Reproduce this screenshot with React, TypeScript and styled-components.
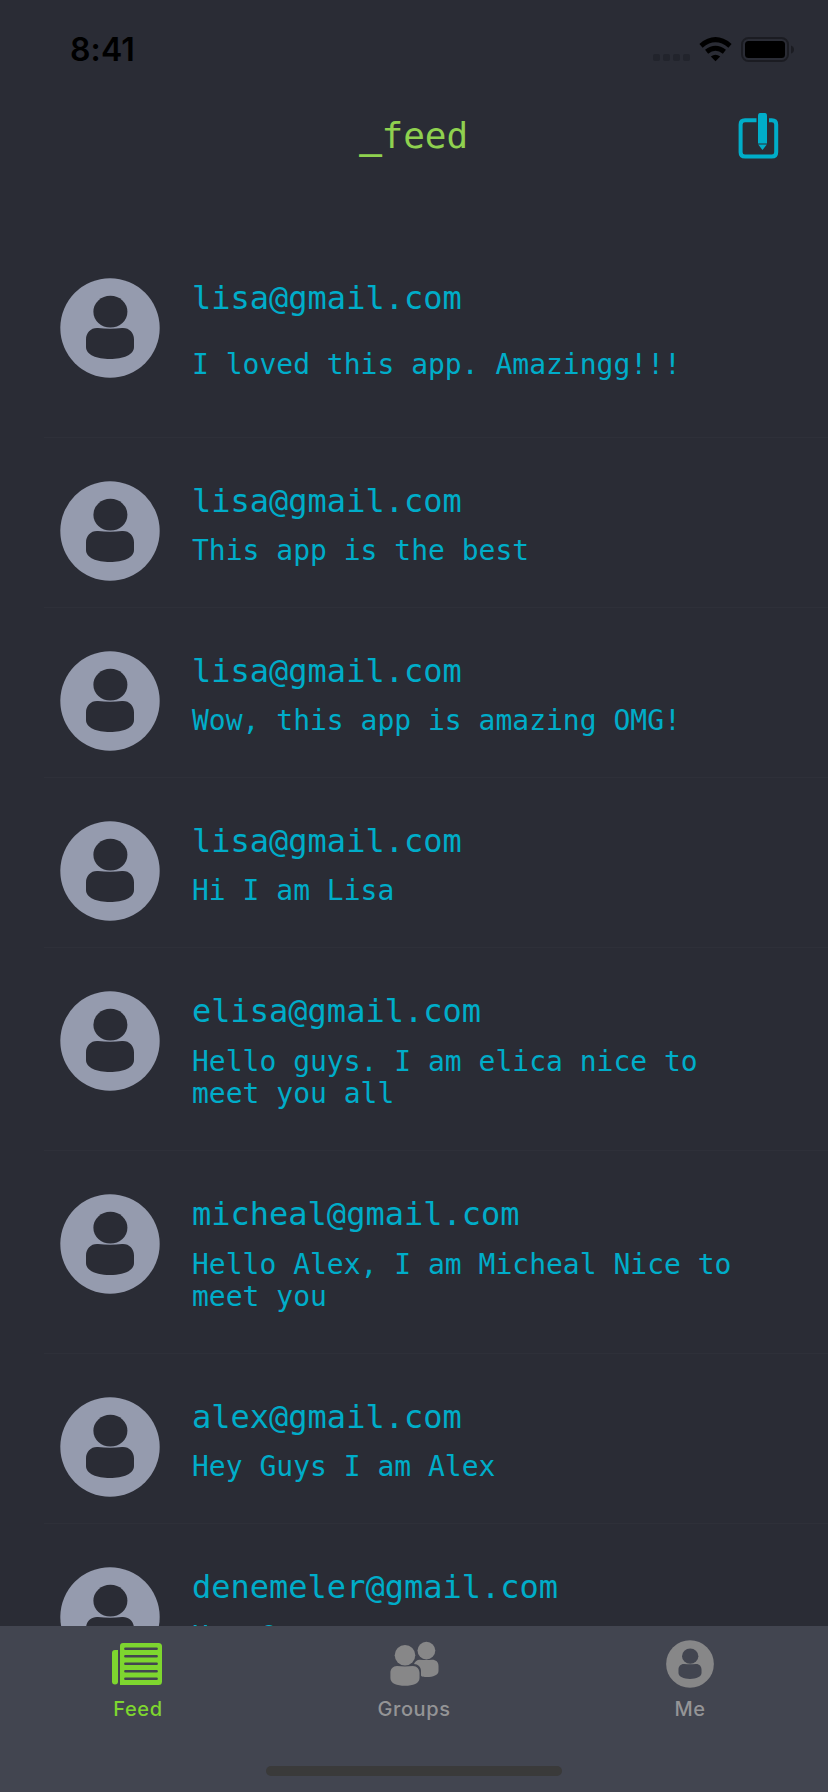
import React from 'react';
import styled, { createGlobalStyle } from 'styled-components';

const Global = createGlobalStyle`
  * { box-sizing: border-box; }
  body { margin: 0; background: #2a2c35; }
`;

const Screen = styled.div`
  width: 828px;
  height: 1792px;
  display: flex;
  flex-direction: column;
  overflow: hidden;
  background: #2a2c35;
  font-family: "DejaVu Sans Mono", monospace;
  color: #00adc9;
`;

const StatusBar = styled.header`
  height: 88px;
  flex: none;
  display: flex;
  justify-content: space-between;
  align-items: flex-start;
  padding: 31px 34px 0 70px;
  color: #000;
`;

const Clock = styled.time`
  font: 600 32px/38px Inter, sans-serif;
  letter-spacing: 0.1px;
`;

const StatusIcons = styled.svg`
  display: block;
  width: 142px;
  height: 26px;
  margin-top: 6px;
`;

const NavBar = styled.div`
  height: 147px;
  flex: none;
  display: grid;
  grid-template-columns: 1fr auto 1fr;
  padding: 24px 48px 0;
`;

const Title = styled.h1`
  grid-column: 2;
  margin: 3px 0 0;
  font-size: 36px;
  line-height: 42px;
  font-weight: 400;
  color: #8fd14f;
`;

const Cursor = styled.span`
  -webkit-text-stroke: 1.4px currentColor;
`;

const ComposeButton = styled.button`
  justify-self: end;
  width: 42px;
  height: 48px;
  padding: 0;
  border: 0;
  background: none;
  color: inherit;
  svg { display: block; }
`;

const FeedList = styled.main`
  flex: 1;
  min-height: 0;
  overflow: hidden;
`;

const Row = styled.article<{ $tall?: boolean }>`
  height: ${(p) => (p.$tall ? 203 : 170)}px;
  display: flex;
  gap: 32px;
  margin-left: 44px;
  padding: 43px 92px 0 16px;
  border-bottom: 1px solid #2e3039;
`;

const AvatarIcon = styled.svg`
  flex: none;
  display: block;
`;

const Message = styled.div`
  flex: 1;
  min-width: 0;
  padding-top: 1px;
`;

const Email = styled.div`
  font-size: 32px;
  line-height: 38px;
`;

const Body = styled.p<{ $tall?: boolean }>`
  display: flex;
  align-items: center;
  height: ${(p) => (p.$tall ? 66 : 33)}px;
  margin: 15px 0 0;
  font-size: 28px;
  line-height: 32.5px;
`;

const TabBar = styled.nav`
  height: 166px;
  flex: none;
  display: flex;
  flex-direction: column;
  align-items: center;
  justify-content: space-between;
  padding-bottom: 16px;
  background: #424550;
`;

const Tabs = styled.div`
  width: 100%;
  display: grid;
  grid-template-columns: repeat(3, 276px);
`;

const Tab = styled.button<{ $active?: boolean }>`
  display: flex;
  flex-direction: column;
  align-items: center;
  padding: 14px 0 0;
  border: 0;
  background: none;
  color: ${(p) => (p.$active ? '#7ed62f' : '#878788')};
  svg { display: block; }
`;

const TabLabel = styled.span<{ $active?: boolean }>`
  margin-top: 9px;
  font: 450 20px/24px Inter, sans-serif;
  letter-spacing: 0.6px;
  color: ${(p) => (p.$active ? '#7ed62f' : '#949496')};
`;

const HomeIndicator = styled.div`
  width: 296px;
  height: 10px;
  border-radius: 5px;
  background: #3a3a3a;
`;

function PersonCircle({ size, fill, cutout }: { size: number; fill: string; cutout: string }) {
  return (
    <AvatarIcon width={size} height={size} viewBox="0 0 100 100">
      <circle cx="50" cy="50" r="49.7" fill={fill} />
      <ellipse cx="50.4" cy="33.7" rx="17" ry="15.9" fill={cutout} />
      <path
        d="M38 50Q50 51.5 62 50C69 49.5 74 54.5 74 61.5V69C74 77 63 81 50 81C37 81 26 77 26 69V61.5C26 54.5 31 49.5 38 50Z"
        fill={cutout}
      />
    </AvatarIcon>
  );
}

function ComposeIcon() {
  return (
    <svg width="42" height="48" viewBox="0 0 42 48" fill="none">
      <path
        d="M18.5 8.2H7Q2.6 8.2 2.6 12.6V40.2Q2.6 44.6 7 44.6H33.8Q38.2 44.6 38.2 40.2V12.6Q38.2 8.2 33.8 8.2H31"
        stroke="currentColor"
        strokeWidth="4"
      />
      <path d="M20 4.2Q20 1 22 1H27Q29 1 29 4.2V31.4H20Z" fill="currentColor" />
      <path d="M20.2 32.6H28.8L24.5 38Z" fill="currentColor" />
    </svg>
  );
}

function NewspaperIcon() {
  return (
    <svg width="52" height="48" viewBox="0 0 52 48" fill="none">
      <path d="M3 10H6V41.5Q6 44.5 3 44.5Q0 44.5 0 41.5V13Q0 10 3 10Z" fill="currentColor" />
      <path d="M11 3H46.5Q50 3 50 6.5V41.5Q50 45 46.5 45H8V6Q8 3 11 3Z" fill="currentColor" />
      <path
        d="M13.4 8.8H44.6M13.4 16.3H44.6M13.4 23.8H44.6M13.4 31.3H44.6M13.4 38.8H44.6"
        stroke="#424550"
        strokeWidth="2.6"
        strokeLinecap="round"
      />
    </svg>
  );
}

function GroupIcon() {
  return (
    <svg width="49" height="48" viewBox="0 2 49 48" fill="currentColor">
      <ellipse cx="36.4" cy="12.6" rx="8.9" ry="8.8" />
      <path d="M29.7 21.8Q36.4 22.4 42 21.8C46 21.8 48.5 24 48.5 28V33C48.5 37 43 39 37 39C34 39 31 38.5 31 37.5V33C31 29 28 26 24 26C25 23.5 27 21.8 29.7 21.8Z" />
      <ellipse cx="15" cy="17.3" rx="10.3" ry="10.2" />
      <path d="M7 28Q15 28.8 22.8 28C27 28 29.5 31 29.5 35V40C29.5 45.5 23 47.8 15 47.8C7 47.8 .4 45.5 .4 40V35C.4 31 3 28 7 28Z" />
    </svg>
  );
}

const posts = [
  { email: 'lisa@gmail.com', text: 'I loved this app. Amazingg!!!', tall: true },
  { email: 'lisa@gmail.com', text: 'This app is the best' },
  { email: 'lisa@gmail.com', text: 'Wow, this app is amazing OMG!' },
  { email: 'lisa@gmail.com', text: 'Hi I am Lisa' },
  { email: 'elisa@gmail.com', text: 'Hello guys. I am elica nice to meet you all', tall: true },
  { email: 'micheal@gmail.com', text: 'Hello Alex, I am Micheal Nice to meet you', tall: true },
  { email: 'alex@gmail.com', text: 'Hey Guys I am Alex' },
  { email: 'denemeler@gmail.com', text: 'Hey Guys' },
];

export default function App() {
  return (
    <Screen>
      <Global />
      <StatusBar>
        <Clock>8:41</Clock>
        <StatusIcons viewBox="0 0 142 26">
          <g fill="#22242c">
            <rect x="1" y="17" width="7" height="7" rx="2" />
            <rect x="11" y="17" width="7" height="7" rx="2" />
            <rect x="21" y="17" width="7" height="7" rx="2" />
            <rect x="31" y="17" width="7" height="7" rx="2" />
          </g>
          <g fill="none" stroke="#000" strokeWidth="5">
            <path d="M49 8.8Q63.5 -3.4 78 8.8" />
            <path d="M54.6 14.8Q63.5 7.8 72.4 14.8" />
          </g>
          <path d="M58.8 19.6Q63.5 16 68.2 19.6L63.5 24.2Z" />
          <rect x="90" y="1" width="46" height="23" rx="6.5" fill="none" stroke="#1b1c22" strokeWidth="2" />
          <rect x="93" y="4" width="40" height="17" rx="3.5" />
          <path d="M139 8.5Q142 9.5 142 12.5Q142 15.5 139 16.5Z" fill="#1b1c22" />
        </StatusIcons>
      </StatusBar>
      <NavBar>
        <Title><Cursor>_</Cursor>feed</Title>
        <ComposeButton aria-label="Compose">
          <ComposeIcon />
        </ComposeButton>
      </NavBar>
      <FeedList>
        {posts.map((post, i) => (
          <Row key={i} $tall={post.tall}>
            <PersonCircle size={100} fill="#959bae" cutout="#2a2c35" />
            <Message>
              <Email>{post.email}</Email>
              <Body $tall={post.tall}>{post.text}</Body>
            </Message>
          </Row>
        ))}
      </FeedList>
      <TabBar>
        <Tabs>
          <Tab $active>
            <NewspaperIcon />
            <TabLabel $active>Feed</TabLabel>
          </Tab>
          <Tab>
            <GroupIcon />
            <TabLabel>Groups</TabLabel>
          </Tab>
          <Tab>
            <PersonCircle size={48} fill="#878788" cutout="#424550" />
            <TabLabel>Me</TabLabel>
          </Tab>
        </Tabs>
        <HomeIndicator />
      </TabBar>
    </Screen>
  );
}
